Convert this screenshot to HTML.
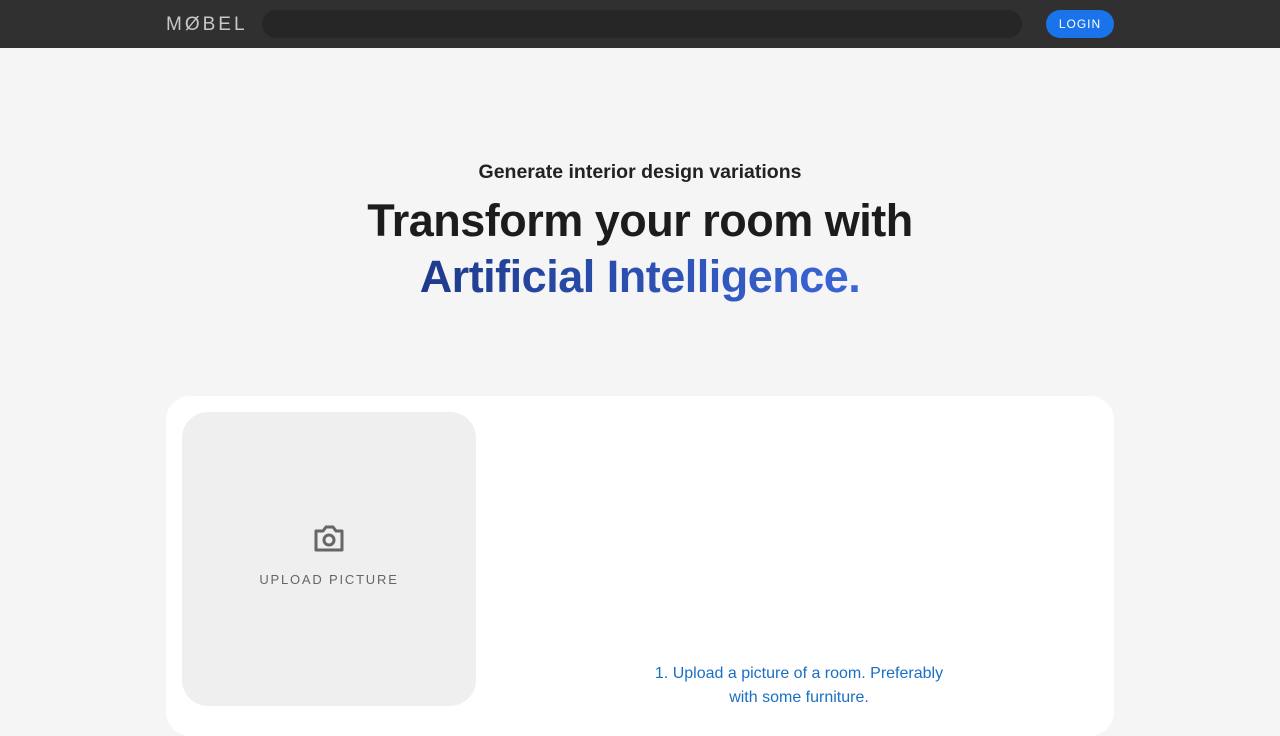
<!DOCTYPE html>
<html><head><style>
*{margin:0;padding:0;box-sizing:border-box}
body{width:1280px;height:720px;overflow:hidden;background:#f5f5f5;font-family:"Liberation Sans",sans-serif;position:relative}
.nav{position:absolute;top:0;left:0;width:1280px;height:48px;background:#303030}
.logo{position:absolute;left:166px;top:14px;font-size:19px;letter-spacing:3px;color:#c8c8c8;font-weight:300}
.search{position:absolute;left:262px;top:10px;width:760px;height:28px;border-radius:14px;background:#262626}
.login{position:absolute;left:1046px;top:10px;width:68px;height:28px;border-radius:14px;background:#1a73e8;color:#fff;font-size:12px;letter-spacing:1px;text-align:center;line-height:29px}
.sub{position:absolute;top:161px;width:1280px;text-align:center;font-size:19.5px;font-weight:bold;color:#222}
.h1{position:absolute;top:193px;width:1280px;text-align:center;font-size:45px;font-weight:bold;color:#1c1c1c;line-height:56px;letter-spacing:-0.5px}
.grad{background:linear-gradient(90deg,#1e3a8a,#3b66d8);-webkit-background-clip:text;color:transparent}
.card{position:absolute;left:166px;top:396px;width:948px;height:340px;background:#fff;border-radius:24px}
.up{position:absolute;left:182px;top:412px;width:294px;height:294px;background:#efefef;border-radius:26px}
.uptxt{position:absolute;top:160px;width:294px;text-align:center;font-size:13px;letter-spacing:1.8px;color:#666}
.inst{position:absolute;left:644px;top:662px;width:310px;text-align:center;color:#1a6fc4;font-size:16px;line-height:24px}
</style></head><body>
<div class="nav"><div class="logo">MØBEL</div><div class="search"></div><div class="login">LOGIN</div></div>
<div class="sub">Generate interior design variations</div>
<div class="h1">Transform your room with<br><span class="grad">Artificial Intelligence.</span></div>
<div class="card"></div>
<div class="up">
<svg style="position:absolute;left:130px;top:111px" width="34" height="32" viewBox="0 0 34 32"><path d="M4 8h7l3-4h7l3 4h6v19H4z" fill="none" stroke="#666" stroke-width="3" stroke-linejoin="round"/><circle cx="17" cy="17" r="5" fill="none" stroke="#666" stroke-width="3"/></svg>
<div class="uptxt">UPLOAD PICTURE</div></div>
<div class="inst">1. Upload a picture of a room. Preferably with some furniture.</div>
</body></html>
